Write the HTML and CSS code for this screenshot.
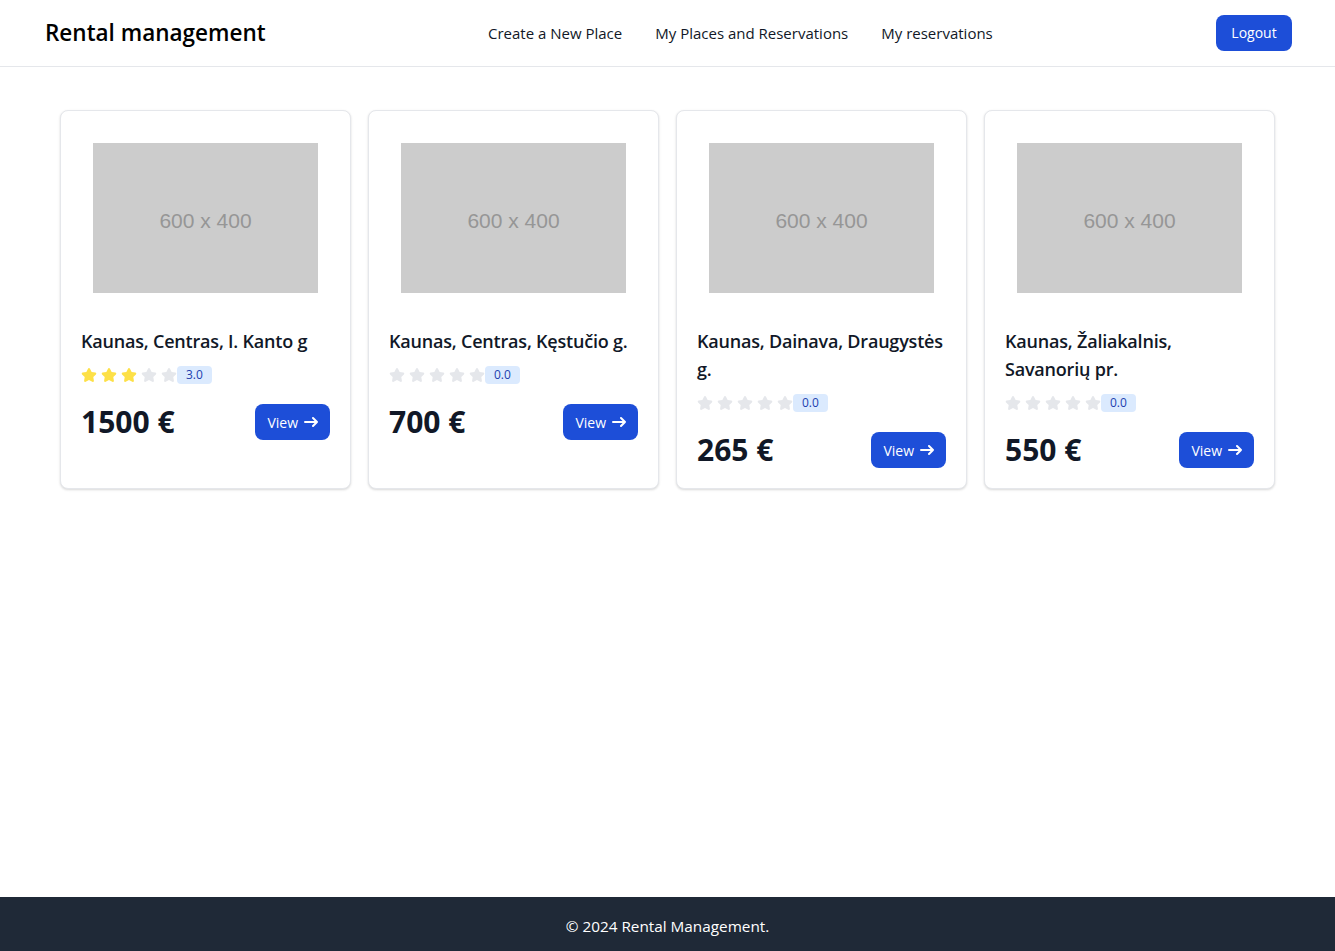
FILE: index.html
```html
<!DOCTYPE html>
<html lang="en">
<head>
<meta charset="utf-8">
<title>Rental management</title>
<link rel="stylesheet" href="styles.css">
</head>
<body>
<div class="page">
  <header class="topbar">
    <div class="brand">Rental management</div>
    <nav class="nav">
      <a href="#">Create a New Place</a>
      <a href="#">My Places and Reservations</a>
      <a href="#">My reservations</a>
    </nav>
    <button class="btn logout">Logout</button>
  </header>

  <main class="main">
    <div class="grid">
      <div class="card">
        <div class="thumb-wrap"><div class="thumb">600 x 400</div></div>
        <div class="body">
          <h5 class="title">Kaunas, Centras, I. Kanto g</h5>
          <div class="rating">
            <svg class="star on" viewBox="0 0 22 20"><path d="M20.924 7.625a1.523 1.523 0 0 0-1.238-1.044l-5.051-.734-2.259-4.577a1.534 1.534 0 0 0-2.752 0L7.365 5.847l-5.051.734A1.535 1.535 0 0 0 1.463 9.2l3.656 3.563-.863 5.031a1.532 1.532 0 0 0 2.226 1.616L11 17.033l4.518 2.375a1.534 1.534 0 0 0 2.226-1.617l-.863-5.03L20.537 9.2a1.523 1.523 0 0 0 .387-1.575Z"/></svg>
            <svg class="star on" viewBox="0 0 22 20"><path d="M20.924 7.625a1.523 1.523 0 0 0-1.238-1.044l-5.051-.734-2.259-4.577a1.534 1.534 0 0 0-2.752 0L7.365 5.847l-5.051.734A1.535 1.535 0 0 0 1.463 9.2l3.656 3.563-.863 5.031a1.532 1.532 0 0 0 2.226 1.616L11 17.033l4.518 2.375a1.534 1.534 0 0 0 2.226-1.617l-.863-5.03L20.537 9.2a1.523 1.523 0 0 0 .387-1.575Z"/></svg>
            <svg class="star on" viewBox="0 0 22 20"><path d="M20.924 7.625a1.523 1.523 0 0 0-1.238-1.044l-5.051-.734-2.259-4.577a1.534 1.534 0 0 0-2.752 0L7.365 5.847l-5.051.734A1.535 1.535 0 0 0 1.463 9.2l3.656 3.563-.863 5.031a1.532 1.532 0 0 0 2.226 1.616L11 17.033l4.518 2.375a1.534 1.534 0 0 0 2.226-1.617l-.863-5.03L20.537 9.2a1.523 1.523 0 0 0 .387-1.575Z"/></svg>
            <svg class="star" viewBox="0 0 22 20"><path d="M20.924 7.625a1.523 1.523 0 0 0-1.238-1.044l-5.051-.734-2.259-4.577a1.534 1.534 0 0 0-2.752 0L7.365 5.847l-5.051.734A1.535 1.535 0 0 0 1.463 9.2l3.656 3.563-.863 5.031a1.532 1.532 0 0 0 2.226 1.616L11 17.033l4.518 2.375a1.534 1.534 0 0 0 2.226-1.617l-.863-5.03L20.537 9.2a1.523 1.523 0 0 0 .387-1.575Z"/></svg>
            <svg class="star" viewBox="0 0 22 20"><path d="M20.924 7.625a1.523 1.523 0 0 0-1.238-1.044l-5.051-.734-2.259-4.577a1.534 1.534 0 0 0-2.752 0L7.365 5.847l-5.051.734A1.535 1.535 0 0 0 1.463 9.2l3.656 3.563-.863 5.031a1.532 1.532 0 0 0 2.226 1.616L11 17.033l4.518 2.375a1.534 1.534 0 0 0 2.226-1.617l-.863-5.03L20.537 9.2a1.523 1.523 0 0 0 .387-1.575Z"/></svg>
            <span class="badge">3.0</span>
          </div>
          <div class="foot">
            <span class="price">1500 €</span>
            <a href="#" class="btn view">View <svg class="arrow" viewBox="0 0 14 10" fill="none"><path d="M1 5h12m0 0L9 1m4 4L9 9" stroke="currentColor" stroke-width="2" stroke-linecap="round" stroke-linejoin="round"/></svg></a>
          </div>
        </div>
      </div>

      <div class="card">
        <div class="thumb-wrap"><div class="thumb">600 x 400</div></div>
        <div class="body">
          <h5 class="title">Kaunas, Centras, Kęstučio g.</h5>
          <div class="rating">
            <svg class="star" viewBox="0 0 22 20"><path d="M20.924 7.625a1.523 1.523 0 0 0-1.238-1.044l-5.051-.734-2.259-4.577a1.534 1.534 0 0 0-2.752 0L7.365 5.847l-5.051.734A1.535 1.535 0 0 0 1.463 9.2l3.656 3.563-.863 5.031a1.532 1.532 0 0 0 2.226 1.616L11 17.033l4.518 2.375a1.534 1.534 0 0 0 2.226-1.617l-.863-5.03L20.537 9.2a1.523 1.523 0 0 0 .387-1.575Z"/></svg>
            <svg class="star" viewBox="0 0 22 20"><path d="M20.924 7.625a1.523 1.523 0 0 0-1.238-1.044l-5.051-.734-2.259-4.577a1.534 1.534 0 0 0-2.752 0L7.365 5.847l-5.051.734A1.535 1.535 0 0 0 1.463 9.2l3.656 3.563-.863 5.031a1.532 1.532 0 0 0 2.226 1.616L11 17.033l4.518 2.375a1.534 1.534 0 0 0 2.226-1.617l-.863-5.03L20.537 9.2a1.523 1.523 0 0 0 .387-1.575Z"/></svg>
            <svg class="star" viewBox="0 0 22 20"><path d="M20.924 7.625a1.523 1.523 0 0 0-1.238-1.044l-5.051-.734-2.259-4.577a1.534 1.534 0 0 0-2.752 0L7.365 5.847l-5.051.734A1.535 1.535 0 0 0 1.463 9.2l3.656 3.563-.863 5.031a1.532 1.532 0 0 0 2.226 1.616L11 17.033l4.518 2.375a1.534 1.534 0 0 0 2.226-1.617l-.863-5.03L20.537 9.2a1.523 1.523 0 0 0 .387-1.575Z"/></svg>
            <svg class="star" viewBox="0 0 22 20"><path d="M20.924 7.625a1.523 1.523 0 0 0-1.238-1.044l-5.051-.734-2.259-4.577a1.534 1.534 0 0 0-2.752 0L7.365 5.847l-5.051.734A1.535 1.535 0 0 0 1.463 9.2l3.656 3.563-.863 5.031a1.532 1.532 0 0 0 2.226 1.616L11 17.033l4.518 2.375a1.534 1.534 0 0 0 2.226-1.617l-.863-5.03L20.537 9.2a1.523 1.523 0 0 0 .387-1.575Z"/></svg>
            <svg class="star" viewBox="0 0 22 20"><path d="M20.924 7.625a1.523 1.523 0 0 0-1.238-1.044l-5.051-.734-2.259-4.577a1.534 1.534 0 0 0-2.752 0L7.365 5.847l-5.051.734A1.535 1.535 0 0 0 1.463 9.2l3.656 3.563-.863 5.031a1.532 1.532 0 0 0 2.226 1.616L11 17.033l4.518 2.375a1.534 1.534 0 0 0 2.226-1.617l-.863-5.03L20.537 9.2a1.523 1.523 0 0 0 .387-1.575Z"/></svg>
            <span class="badge">0.0</span>
          </div>
          <div class="foot">
            <span class="price">700 €</span>
            <a href="#" class="btn view">View <svg class="arrow" viewBox="0 0 14 10" fill="none"><path d="M1 5h12m0 0L9 1m4 4L9 9" stroke="currentColor" stroke-width="2" stroke-linecap="round" stroke-linejoin="round"/></svg></a>
          </div>
        </div>
      </div>

      <div class="card">
        <div class="thumb-wrap"><div class="thumb">600 x 400</div></div>
        <div class="body">
          <h5 class="title">Kaunas, Dainava, Draugystės g.</h5>
          <div class="rating">
            <svg class="star" viewBox="0 0 22 20"><path d="M20.924 7.625a1.523 1.523 0 0 0-1.238-1.044l-5.051-.734-2.259-4.577a1.534 1.534 0 0 0-2.752 0L7.365 5.847l-5.051.734A1.535 1.535 0 0 0 1.463 9.2l3.656 3.563-.863 5.031a1.532 1.532 0 0 0 2.226 1.616L11 17.033l4.518 2.375a1.534 1.534 0 0 0 2.226-1.617l-.863-5.03L20.537 9.2a1.523 1.523 0 0 0 .387-1.575Z"/></svg>
            <svg class="star" viewBox="0 0 22 20"><path d="M20.924 7.625a1.523 1.523 0 0 0-1.238-1.044l-5.051-.734-2.259-4.577a1.534 1.534 0 0 0-2.752 0L7.365 5.847l-5.051.734A1.535 1.535 0 0 0 1.463 9.2l3.656 3.563-.863 5.031a1.532 1.532 0 0 0 2.226 1.616L11 17.033l4.518 2.375a1.534 1.534 0 0 0 2.226-1.617l-.863-5.03L20.537 9.2a1.523 1.523 0 0 0 .387-1.575Z"/></svg>
            <svg class="star" viewBox="0 0 22 20"><path d="M20.924 7.625a1.523 1.523 0 0 0-1.238-1.044l-5.051-.734-2.259-4.577a1.534 1.534 0 0 0-2.752 0L7.365 5.847l-5.051.734A1.535 1.535 0 0 0 1.463 9.2l3.656 3.563-.863 5.031a1.532 1.532 0 0 0 2.226 1.616L11 17.033l4.518 2.375a1.534 1.534 0 0 0 2.226-1.617l-.863-5.03L20.537 9.2a1.523 1.523 0 0 0 .387-1.575Z"/></svg>
            <svg class="star" viewBox="0 0 22 20"><path d="M20.924 7.625a1.523 1.523 0 0 0-1.238-1.044l-5.051-.734-2.259-4.577a1.534 1.534 0 0 0-2.752 0L7.365 5.847l-5.051.734A1.535 1.535 0 0 0 1.463 9.2l3.656 3.563-.863 5.031a1.532 1.532 0 0 0 2.226 1.616L11 17.033l4.518 2.375a1.534 1.534 0 0 0 2.226-1.617l-.863-5.03L20.537 9.2a1.523 1.523 0 0 0 .387-1.575Z"/></svg>
            <svg class="star" viewBox="0 0 22 20"><path d="M20.924 7.625a1.523 1.523 0 0 0-1.238-1.044l-5.051-.734-2.259-4.577a1.534 1.534 0 0 0-2.752 0L7.365 5.847l-5.051.734A1.535 1.535 0 0 0 1.463 9.2l3.656 3.563-.863 5.031a1.532 1.532 0 0 0 2.226 1.616L11 17.033l4.518 2.375a1.534 1.534 0 0 0 2.226-1.617l-.863-5.03L20.537 9.2a1.523 1.523 0 0 0 .387-1.575Z"/></svg>
            <span class="badge">0.0</span>
          </div>
          <div class="foot">
            <span class="price">265 €</span>
            <a href="#" class="btn view">View <svg class="arrow" viewBox="0 0 14 10" fill="none"><path d="M1 5h12m0 0L9 1m4 4L9 9" stroke="currentColor" stroke-width="2" stroke-linecap="round" stroke-linejoin="round"/></svg></a>
          </div>
        </div>
      </div>

      <div class="card">
        <div class="thumb-wrap"><div class="thumb">600 x 400</div></div>
        <div class="body">
          <h5 class="title">Kaunas, Žaliakalnis, Savanorių pr.</h5>
          <div class="rating">
            <svg class="star" viewBox="0 0 22 20"><path d="M20.924 7.625a1.523 1.523 0 0 0-1.238-1.044l-5.051-.734-2.259-4.577a1.534 1.534 0 0 0-2.752 0L7.365 5.847l-5.051.734A1.535 1.535 0 0 0 1.463 9.2l3.656 3.563-.863 5.031a1.532 1.532 0 0 0 2.226 1.616L11 17.033l4.518 2.375a1.534 1.534 0 0 0 2.226-1.617l-.863-5.03L20.537 9.2a1.523 1.523 0 0 0 .387-1.575Z"/></svg>
            <svg class="star" viewBox="0 0 22 20"><path d="M20.924 7.625a1.523 1.523 0 0 0-1.238-1.044l-5.051-.734-2.259-4.577a1.534 1.534 0 0 0-2.752 0L7.365 5.847l-5.051.734A1.535 1.535 0 0 0 1.463 9.2l3.656 3.563-.863 5.031a1.532 1.532 0 0 0 2.226 1.616L11 17.033l4.518 2.375a1.534 1.534 0 0 0 2.226-1.617l-.863-5.03L20.537 9.2a1.523 1.523 0 0 0 .387-1.575Z"/></svg>
            <svg class="star" viewBox="0 0 22 20"><path d="M20.924 7.625a1.523 1.523 0 0 0-1.238-1.044l-5.051-.734-2.259-4.577a1.534 1.534 0 0 0-2.752 0L7.365 5.847l-5.051.734A1.535 1.535 0 0 0 1.463 9.2l3.656 3.563-.863 5.031a1.532 1.532 0 0 0 2.226 1.616L11 17.033l4.518 2.375a1.534 1.534 0 0 0 2.226-1.617l-.863-5.03L20.537 9.2a1.523 1.523 0 0 0 .387-1.575Z"/></svg>
            <svg class="star" viewBox="0 0 22 20"><path d="M20.924 7.625a1.523 1.523 0 0 0-1.238-1.044l-5.051-.734-2.259-4.577a1.534 1.534 0 0 0-2.752 0L7.365 5.847l-5.051.734A1.535 1.535 0 0 0 1.463 9.2l3.656 3.563-.863 5.031a1.532 1.532 0 0 0 2.226 1.616L11 17.033l4.518 2.375a1.534 1.534 0 0 0 2.226-1.617l-.863-5.03L20.537 9.2a1.523 1.523 0 0 0 .387-1.575Z"/></svg>
            <svg class="star" viewBox="0 0 22 20"><path d="M20.924 7.625a1.523 1.523 0 0 0-1.238-1.044l-5.051-.734-2.259-4.577a1.534 1.534 0 0 0-2.752 0L7.365 5.847l-5.051.734A1.535 1.535 0 0 0 1.463 9.2l3.656 3.563-.863 5.031a1.532 1.532 0 0 0 2.226 1.616L11 17.033l4.518 2.375a1.534 1.534 0 0 0 2.226-1.617l-.863-5.03L20.537 9.2a1.523 1.523 0 0 0 .387-1.575Z"/></svg>
            <span class="badge">0.0</span>
          </div>
          <div class="foot">
            <span class="price">550 €</span>
            <a href="#" class="btn view">View <svg class="arrow" viewBox="0 0 14 10" fill="none"><path d="M1 5h12m0 0L9 1m4 4L9 9" stroke="currentColor" stroke-width="2" stroke-linecap="round" stroke-linejoin="round"/></svg></a>
          </div>
        </div>
      </div>
    </div>
  </main>

  <footer class="footer">© 2024 Rental Management.</footer>
</div>
</body>
</html>
```

FILE: styles.css
```css
* { box-sizing: border-box; }
html, body { margin: 0; padding: 0; }
body {
  font-family: "Open Sans", "Noto Sans", sans-serif;
  color: #111827;
  background: #fff;
}
.page {
  min-height: 100vh;
  display: flex;
  flex-direction: column;
}
.topbar {
  height: 67px;
  border-bottom: 1px solid #e5e7eb;
  display: flex;
  align-items: center;
  justify-content: space-between;
  padding: 0 43px 1px 45px;
}
.brand {
  font-size: 22.5px;
  font-weight: 600;
  color: #000;
  width: 300px;
}
.nav {
  display: flex;
  gap: 33px;
  margin-left: 143px;
}
.nav a {
  color: #111827;
  text-decoration: none;
  font-size: 15px;
}
.btn {
  background: #1d4ed8;
  color: #fff;
  border: 0;
  border-radius: 8px;
  font-family: inherit;
  font-size: 14px;
  text-decoration: none;
  display: inline-flex;
  align-items: center;
}
.logout {
  height: 36px;
  padding: 0 16px;
  width: 76px;
  justify-content: center;
  margin-left: auto;
}
.main {
  flex: 1;
  padding: 43px 60px;
}
.grid {
  display: grid;
  grid-template-columns: repeat(4, 1fr);
  gap: 17px;
}
.card {
  border: 1px solid #e5e7eb;
  border-radius: 8px;
  box-shadow: 0 1px 3px rgba(0,0,0,0.1), 0 1px 2px rgba(0,0,0,0.06);
  background: #fff;
}
.thumb-wrap { padding: 32px 32px 34px; }
.thumb {
  background: #cccccc;
  aspect-ratio: 3 / 2;
  display: flex;
  align-items: center;
  justify-content: center;
  padding-top: 6px;
  color: #969696;
  font-family: "Liberation Sans", sans-serif;
  font-size: 21px;
}
.body { padding: 0 20px 20px; }
.title {
  margin: 0;
  font-size: 18px;
  line-height: 28px;
  font-weight: 600;
  letter-spacing: -0.2px;
  color: #111827;
}
.rating {
  display: flex;
  align-items: center;
  gap: 4px;
  margin: 10px 0 19px;
  height: 20px;
}
.star { width: 16px; height: 16px; fill: #e5e7eb; }
.star.on { fill: #fde047; }
.badge {
  background: #dbeafe;
  color: #1e40af;
  font-size: 12px;
  line-height: 18px;
  padding: 0 9px;
  border-radius: 4px;
  margin-left: -4px;
}
.foot {
  display: flex;
  align-items: center;
  justify-content: space-between;
}
.price {
  font-size: 30px;
  line-height: 36px;
  font-weight: 700;
  color: #111827;
}
.view {
  height: 36px;
  padding: 0 12px;
  gap: 6px;
}
.arrow { width: 14px; height: 14px; }
.footer {
  background: #1f2937;
  color: #fff;
  height: 54px;
  display: flex;
  align-items: center;
  justify-content: center;
  padding-top: 3px;
  font-size: 15.3px;
}
```
